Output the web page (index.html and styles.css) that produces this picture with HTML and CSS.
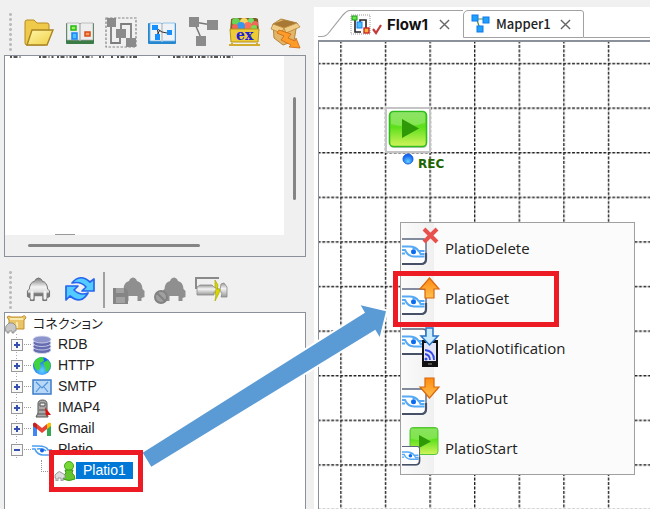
FILE: index.html
```html
<!DOCTYPE html>
<html lang="ja">
<head>
<meta charset="utf-8">
<title>Flow1</title>
<link rel="stylesheet" href="styles.css">
</head>
<body>
<svg class="defs" aria-hidden="true">
  <defs>
    <linearGradient id="gold" x1="0" y1="0" x2="1" y2="1"><stop offset="0" stop-color="#fff6a8"/><stop offset="1" stop-color="#f0cf45"/></linearGradient>
    <linearGradient id="green" x1="0" y1="0" x2="0" y2="1"><stop offset="0" stop-color="#6fdc3c"/><stop offset=".45" stop-color="#5ee01c"/><stop offset="1" stop-color="#d3f45c"/></linearGradient>
    <linearGradient id="orange" x1="0" y1="0" x2="0" y2="1"><stop offset="0" stop-color="#ff8a10"/><stop offset="1" stop-color="#ffc050"/></linearGradient>
    <linearGradient id="silver" x1="0" y1="0" x2="0" y2="1"><stop offset="0" stop-color="#7a7a7a"/><stop offset=".4" stop-color="#f4f4f4"/><stop offset=".62" stop-color="#dcdcdc"/><stop offset=".7" stop-color="#777"/><stop offset="1" stop-color="#8a8a8a"/></linearGradient>
    <linearGradient id="metal" x1="0" y1="0" x2="0" y2="1"><stop offset="0" stop-color="#9a9a9a"/><stop offset=".4" stop-color="#f4f4f4"/><stop offset="1" stop-color="#9a9a9a"/></linearGradient>
    <radialGradient id="ball" cx=".5" cy=".75" r=".6"><stop offset="0" stop-color="#5fd0ff"/><stop offset="1" stop-color="#1767f0"/></radialGradient>
    <symbol id="platio" viewBox="0 0 26 28">
      <path d="M-4 1H21q3 0 3 3V21q0 5-5 5H-4z" fill="#fff" stroke="#5b6780" stroke-width="1.400"/>
      <path d="M-4 26H19q5 0 5-5V15" fill="none" stroke="#465168" stroke-width="2.200"/>
      <path d="M0 8.500h7c5 0 8 1.500 9.500 4.500h6M0 12h3c2 4.500 5 6.500 9 6.500h10.500M22.500 16h-4c-2-5-5-6-8-6M0 15.500h3" fill="none" stroke="#55a9f5" stroke-width="1.900"/>
      <circle cx="11.500" cy="13.700" r="2.500" fill="#0a6cf0"/>
    </symbol>
    <symbol id="car" viewBox="0 0 26 28">
      <path d="M10 4q3-3 6 0l1 2q5 1 5.500 8l2 2v6l-3 1v3h-4v-5h-9v5h-4v-3l-3-1v-6l2-2Q4 7 9 6z"/>
    </symbol>
  </defs>
</svg>

<div class="app">
  <aside class="side">
    <div class="toolbar" role="toolbar">
      <span class="grip"></span>
      <button class="tool" aria-label="Open"><svg viewBox="0 0 34 34"><path d="M3 7q0-2 2-2h7l3 3h10q2 0 2 2v14l-4 6H5q-2 0-2-2z" fill="#efc94a" stroke="#b88a20"/><path d="M10 15h21l-6 15H5z" fill="url(#gold)" stroke="#a98422" stroke-width="1.400"/></svg></button>
      <button class="tool" aria-label="Flow"><svg viewBox="0 0 34 34"><rect x="3" y="8" width="28" height="21" rx="1" fill="#3b7b45"/><path d="M4 8h12l1 1 1-1h12v17H18l-1 1-1-1H4z" fill="#eee" stroke="#aaa" stroke-width=".7"/><path d="M17 8v18" stroke="#999"/><rect x="8" y="11" width="5" height="4" fill="#9af05a" stroke="#23ba16" stroke-width="1.500"/><rect x="9" y="18" width="5" height="6" fill="#4fc0ff" stroke="#1684f5" stroke-width="1.500"/><rect x="22" y="17" width="5" height="4" fill="#ff9b62" stroke="#d84b14" stroke-width="1.500"/></svg></button>
      <button class="tool" aria-label="Group"><svg viewBox="0 0 34 34" fill="#8b8b8b"><rect x="2" y="3" width="30" height="29" fill="none" stroke="#858585" stroke-width="1.200" stroke-dasharray="2.500 1.500"/><path d="M7 12v16h9v-6M17 14V9h10v16" fill="none" stroke="#7d7d7d" stroke-width="1.800"/><rect x="3" y="3" width="9" height="9"/><rect x="12" y="14" width="10" height="9"/><rect x="22" y="23" width="10" height="9"/></svg></button>
      <button class="tool" aria-label="Mapping"><svg viewBox="0 0 34 34"><rect x="3" y="8" width="28" height="21" rx="1" fill="#2587cf"/><path d="M5 8h11l1 1 1-1h12v18H18l-1 1-1-1H5z" fill="#eef3f8" stroke="#7cb7e2" stroke-width=".8"/><path d="M17 8v18" stroke="#aaa"/><path d="M11 13l6 4 5 1M12 13l2 9M15 15l-3 5" fill="none" stroke="#333"/><g fill="#1690ff"><rect x="7" y="10" width="6" height="5"/><rect x="10" y="19" width="5" height="6"/><rect x="22" y="15" width="5" height="5"/></g></svg></button>
      <button class="tool" aria-label="Nodes"><svg viewBox="0 0 34 34" fill="#8b8b8b"><path d="M8 7l18 3M9 9l6 14" fill="none" stroke="#777" stroke-width="1.500"/><rect x="3" y="2" width="10" height="10"/><rect x="21" y="5" width="11" height="10"/><rect x="10" y="21" width="10" height="10"/></svg></button>
      <button class="tool" aria-label="Samples"><svg viewBox="0 0 34 34"><path d="M4 4l3-1h22l2 1 1 12H3z" fill="#806022"/><circle cx="9" cy="7" r="4" fill="#67d455"/><circle cx="17" cy="7" r="4" fill="#f6d860"/><circle cx="24" cy="6" r="3" fill="#70e070"/><circle cx="28" cy="9" r="3" fill="#ef6858"/><circle cx="21" cy="11" r="4" fill="#ff7259"/><circle cx="14" cy="11" r="4" fill="#3896ef"/><circle cx="8" cy="12" r="3" fill="#f26653"/><circle cx="27" cy="13" r="3" fill="#76dd50"/><path d="M3 14h29l-1 13H4z" fill="#edcc38" stroke="#b5921c"/><path d="M2 30h31M5 28v3M30 28v3" stroke="#d2ac2d" stroke-width="2"/><text class="ex" x="9" y="25">ex</text></svg></button>
      <button class="tool" aria-label="Deploy"><svg viewBox="0 0 34 34"><path d="M5 9l8-5 16 4-3 18-11 4-9-7z" fill="#e2b568" stroke="#b5853d"/><path d="M5 9l11 4 13-5-13-3z" fill="#a87835"/><path d="M5 9l11 4-3 5-10-4zM16 13l13-5 3 4-14 6z" fill="#f0cd86" stroke="#b6863e" stroke-width=".8"/><path d="M11 15l12 4-3 4 7 3 1-3 4 10-11-1 2-2-10-5 3-4-7-3z" fill="#ff9b28" stroke="#c86912" stroke-width=".8"/></svg></button>
    </div>
    <section class="pane pane-top">
      <div class="view">
        <svg class="trace" viewBox="0 0 240 3" aria-hidden="true"><path d="M5 1h12M34 1h16M52 1h22M77 1h12M94 1h5M106 1h3M112 1h20M153 1h3M168 1h60" fill="none" stroke="#555" stroke-width="2" stroke-dasharray="2 1.500 4 2 1 2"/></svg>
        <span class="trace-end"></span>
      </div>
      <div class="track-y"><span class="thumb-y"></span></div>
      <div class="track-x"><span class="thumb-x"></span></div>
    </section>
    <div class="toolbar toolbar-low" role="toolbar">
      <span class="grip"></span>
      <button class="tool" aria-label="Connection"><svg viewBox="0 0 34 34"><use href="#car" x="4" y="2" width="25" height="28" fill="url(#silver)" stroke="#707070"/><path d="M10 19v6M23 19v6" stroke="#f2f2f2" stroke-width="3" stroke-linecap="round"/></svg></button>
      <button class="tool" aria-label="Refresh"><svg viewBox="0 0 34 34"><g fill="#55ccff" stroke="#2464f0" stroke-width="1.700" stroke-linejoin="round"><path d="M9 10q8-10 18-1l4-3v12H19l4-4q-5-6-14-4z"/><path d="M3 13h12l-4 4q6 6 14 3-7 12-18 3l-4 4z"/></g></svg></button>
      <span class="divider"></span>
      <button class="tool" aria-label="Save connection"><svg viewBox="0 0 34 34" fill="#8f8f8f"><use href="#car" x="8" y="2" width="26" height="28"/><path d="M1 15h12l3 3v13H1z" fill="#858585"/><path d="M4 15h8v5H4zM4 24h9v6H4z" fill="#a2a2a2"/></svg></button>
      <button class="tool" aria-label="Disable connection"><svg viewBox="0 0 34 34" fill="#8f8f8f"><use href="#car" x="8" y="2" width="26" height="28"/><circle cx="8" cy="24" r="6" fill="#a0a0a0" stroke="#828282" stroke-width="2"/><path d="M4 20l8 8" stroke="#828282" stroke-width="2"/></svg></button>
      <button class="tool" aria-label="Test connection"><svg viewBox="0 0 34 34"><path d="M2 16V5h23" fill="none" stroke="#8a8a8a" stroke-width="2"/><path d="M3 14l3-2h12l2 2 4 1v4h-4v3H3z" fill="url(#metal)" stroke="#888" stroke-width=".8"/><path d="M27 11l3-1 3 4v10h-6l1-3-2-4z" fill="url(#metal)" stroke="#888" stroke-width=".8"/><path d="M21 7l3 5-1 4h3l-1 4-4 8 1-7h-1l1-5-1-3z" fill="#d9d600" stroke="#a9a900" stroke-width=".7"/></svg></button>
    </div>
    <section class="pane pane-tree">
      <ul class="tree" role="tree">
        <li class="row root"><svg class="root-icon" viewBox="0 0 22 20"><path d="M2 3q2-2 4 0h11q3-3 4 1l-2 2v9H4V6z" fill="#e9c469" stroke="#c18f2e"/><path d="M5 5h13M12 8v6" stroke="#fae9ad" stroke-width="2"/><path d="M1 12l3-3h4l3 3v5H9v2H7v-2H4v2H2v-2H0z" fill="#c7c7c7" stroke="#858585" stroke-width=".8"/></svg><span>コネクション</span></li>
        <li class="row"><button class="twist" aria-label="RDB +"></button><i class="lead"></i><svg class="kind" viewBox="0 0 20 20"><g fill="#666cb0" stroke="#d8daf0" stroke-width=".8"><ellipse cx="10" cy="15" rx="9" ry="3.500"/><ellipse cx="10" cy="11.500" rx="9" ry="3.500"/><ellipse cx="10" cy="8" rx="9" ry="3.500"/><ellipse cx="10" cy="4.500" rx="9" ry="3.500" fill="#8e94cc"/></g></svg><span>RDB</span></li>
        <li class="row"><button class="twist" aria-label="HTTP +"></button><i class="lead"></i><svg class="kind" viewBox="0 0 20 20"><circle cx="10" cy="10" r="9" fill="url(#ball)"/><path d="M2 6Q5 1 11 1l1 4-4 2 1 4-3 4Q3 13 2 10zM11 7l5-3 3 5-2 5-3 2-1-5z" fill="#3ed33f"/></svg><span>HTTP</span></li>
        <li class="row"><button class="twist" aria-label="SMTP +"></button><i class="lead"></i><svg class="kind" viewBox="0 0 20 20"><rect x="1" y="3" width="18" height="14" fill="#b9d7f6" stroke="#3d7cc9" stroke-width="1.500"/><path d="M4 5l6 6 6-6M4 15l4-5M16 15l-4-5" fill="none" stroke="#4d93dc" stroke-width="1.200"/></svg><span>SMTP</span></li>
        <li class="row"><button class="twist" aria-label="IMAP4 +"></button><i class="lead"></i><svg class="kind" viewBox="0 0 20 20"><path d="M6 6q0-4 4.500-4T15 6v9l1 4H4l2-4z" fill="#aaa" stroke="#555"/><path d="M8 5h5v3H8zM7 12h7M6 16h8" fill="#eee" stroke="#555"/><path d="M13 9l6 8h-4l-1 2z" fill="#d81515"/></svg><span>IMAP4</span></li>
        <li class="row"><button class="twist" aria-label="Gmail +"></button><i class="lead"></i><svg class="kind" viewBox="0 0 20 20"><path d="M1 4v13h4V8z" fill="#4285f4"/><path d="M19 4v13h-4V8z" fill="#34a853"/><path d="M5 5v5l5 4 5-4V5l-5 4z" fill="#ea4335"/><path d="M1 5q1-3 4 0v5L1 7z" fill="#c5221f"/><path d="M19 5q-1-3-4 0v5l4-3z" fill="#fbbc04"/></svg><span>Gmail</span></li>
        <li class="row"><button class="twist open" aria-label="Platio −"></button><i class="lead"></i><svg class="kind" viewBox="0 0 20 20"><path d="M0 6h6c5 0 9 1 10 4h4M0 9h3c1 4 5 6 8 6h9M5 9q6-1 9 2" fill="none" stroke="#4d9df2" stroke-width="1.600"/><circle cx="10" cy="10.500" r="2" fill="#0a61e8"/></svg><span>Platio</span></li>
        <li class="row child"><i class="elbow"></i><svg class="user-icon" viewBox="0 0 22 20"><circle cx="15" cy="5" r="4.500" fill="#78d936" stroke="#41a51b"/><path d="M9 18q0-4 3-6l-1-3h8l-1 3q3 2 3 6-6 3-12 0z" fill="#63c52b" stroke="#379b18"/><path d="M1 14l2-2q2-3 5 0l3 2v3H9v3H7v-3H4v3H2v-3H1z" fill="#ddd" stroke="#888" stroke-width=".8"/></svg><span class="picked">Platio1</span></li>
      </ul>
    </section>
  </aside>

  <main class="work">
    <div class="tabs">
      <svg class="slope" viewBox="0 0 32 28" aria-hidden="true"><path d="M0 26.500h4q4 0 7-4L25 5q4-4.500 7-4.500" fill="none" stroke="#a2a2a2" stroke-width="1.200"/></svg>
      <div class="tab tab-on">
        <svg class="flow-icon" viewBox="0 0 32 22"><rect x="1" y="1" width="19" height="19" fill="none" stroke="#999" stroke-dasharray="1 1"/><path d="M5 5v13h6M10 9V6h6v10" fill="none" stroke="#222" stroke-width="1.600"/><rect x="2" y="2" width="5" height="4" fill="#66e64b" stroke="#1a9c17"/><rect x="7" y="8" width="5" height="6" fill="#4cc0ff" stroke="#1680ef"/><rect x="14" y="14" width="5" height="5" fill="#ffb03c" stroke="#c81d1d" stroke-width="1.300"/><path d="M23 15l3 4 5-8" fill="none" stroke="#c23a3a" stroke-width="2.200"/></svg>
        <button class="name">Flow1</button>
        <button class="close" aria-label="Close Flow1"><svg viewBox="0 0 12 12"><path d="M1 1l10 10M11 1L1 11"/></svg></button>
      </div>
      <div class="tab tab-off">
        <svg class="map-icon" viewBox="0 0 20 20"><path d="M5 5h10M6 6l3 9" fill="none" stroke="#4a8a3c" stroke-width="1.200"/><g fill="#1ea0ff" stroke="#1478e8"><rect x="1" y="1" width="6" height="6"/><rect x="12" y="3" width="6" height="6"/><rect x="6" y="12" width="6" height="6"/></g></svg>
        <button class="name">Mapper1</button>
        <button class="close" aria-label="Close Mapper1"><svg viewBox="0 0 12 12"><path d="M1 1l10 10M11 1L1 11"/></svg></button>
      </div>
      <span class="tab-rest"></span>
    </div>
    <div class="canvas">
      <svg class="grid" aria-hidden="true">
        <defs><pattern id="cell" x="21.200" y="20.800" width="44.600" height="44.600" patternUnits="userSpaceOnUse"><path d="M0 .7h44.600M.7 0v44.600" stroke="#222" stroke-width="1.400" stroke-dasharray="2.860 1.600" fill="none"/></pattern></defs>
        <rect width="100%" height="100%" fill="url(#cell)"/>
      </svg>
      <div class="node">
        <svg viewBox="0 0 46 46"><rect x="1" y="1" width="44" height="44" fill="#fff" stroke="#c4c4c4" stroke-width="2"/><rect x="5" y="5" width="37" height="36" rx="4" fill="#888" opacity=".5"/><rect x="4.500" y="4.500" width="37" height="35" rx="4" fill="url(#green)" stroke="#2fbf1c" stroke-width="1.600"/><path d="M6 8q0-3 3-3h28q3 0 3 3v8q-17 6-34 1z" fill="#fff" opacity=".22"/><path d="M17 12v19l17-9.500z" fill="#2f9a08"/></svg>
      </div>
      <div class="port"><svg viewBox="0 0 12 12"><circle cx="6" cy="6" r="5" fill="url(#ball)" stroke="#1a5de0"/></svg><span>REC</span></div>
      <div class="menu" role="menu">
        <button class="item" role="menuitem"><svg viewBox="0 0 40 50"><use href="#platio" x="0" y="15" width="26" height="28"/><path d="M22 6l13 13M35 6L22 19" stroke="#e8504e" stroke-width="4"/></svg>PlatioDelete</button>
        <button class="item" role="menuitem"><svg viewBox="0 0 40 50"><use href="#platio" x="0" y="15" width="26" height="28"/><path d="M27.500 5L37 16h-5v9h-9v-9h-5z" fill="url(#orange)" stroke="#d9660c" stroke-width="1.200"/></svg>PlatioGet</button>
        <button class="item" role="menuitem"><svg viewBox="0 0 40 50"><use href="#platio" x="0" y="5" width="26" height="28"/><rect x="20" y="17" width="16" height="27" fill="#111"/><rect x="22" y="20" width="12" height="18" fill="#e2e6f8"/><path d="M23 27q9 1 9 10M23 31q5 1 5 6" fill="none" stroke="#3548e8" stroke-width="1.800"/><circle cx="24" cy="36" r="1.500" fill="#3548e8"/><path d="M26 41h4" stroke="#999"/><path d="M24 5h7v8h5l-8.500 9-8.500-9h5z" fill="#c9eaff" stroke="#2874c8" stroke-width="1.500"/></svg>PlatioNotification</button>
        <button class="item" role="menuitem"><svg viewBox="0 0 40 50"><use href="#platio" x="0" y="15" width="26" height="28"/><path d="M23 5h9v9h5l-9.500 11L18 14h5z" fill="url(#orange)" stroke="#d9660c" stroke-width="1.200"/></svg>PlatioPut</button>
        <button class="item" role="menuitem"><svg viewBox="0 0 40 50"><rect x="8" y="4.500" width="28" height="27" rx="3" fill="url(#green)" stroke="#55c63a"/><path d="M9 6h26v9q-13 4-26 1z" fill="#fff" opacity=".2"/><path d="M17 12v13l12-6.500z" fill="#2f9a08"/><use href="#platio" x="0" y="22" width="19" height="22"/></svg>PlatioStart</button>
      </div>
    </div>
  </main>

  <svg class="pointer" viewBox="0 0 260 170" aria-hidden="true"><path d="M6.700 151.700L229 11.700 224.700 4.300 250 10.300 243.700 36 239.300 28.700 15.300 165.700z" fill="#5b9bd5" stroke="#fff" stroke-width="4" paint-order="stroke"/></svg>
  <span class="mark mark-node"></span>
  <span class="mark mark-item"></span>
</div>
</body>
</html>
```
FILE: styles.css
```css
* { box-sizing: border-box; }

body {
  margin: 0;
  background: #f0f0f0;
  color: #222;
  font-family: "Liberation Sans", "Noto Sans CJK JP", sans-serif;
  font-size: 14px;
}

button {
  margin: 0;
  padding: 0;
  border: 0;
  background: none;
  color: inherit;
  font: inherit;
}

svg { display: block; flex: none; }

.defs { position: absolute; width: 0; height: 0; }

.app {
  position: relative;
  display: grid;
  grid-template-columns: 314fr 336fr;
  height: 100vh;
  overflow: hidden;
}

/* Left side */
.side {
  display: flex;
  flex-direction: column;
  min-width: 0;
  padding: 0 8px 0 4px;
}

.toolbar {
  display: flex;
  align-items: center;
  height: 55px;
  padding: 9px 0 0 5px;
}

.toolbar-low { padding-top: 11px; }

.grip {
  width: 3px;
  height: 40px;
  margin-right: 6px;
  background: radial-gradient(circle, #bbb 1px, transparent 2px) 0 0 / 3px 5px;
}

.tool { flex: none; width: 41px; }
.tool svg { width: 34px; height: 34px; margin: 0 auto; }

.ex {
  fill: #1d20d8;
  font: bold 14px "DejaVu Serif", serif;
}

.divider {
  width: 2px;
  height: 36px;
  margin: 0 3px;
  background: #a0a0a0;
}

.pane {
  border: 1px solid #8b919b;
  min-height: 0;
}

.pane-top {
  flex: 202 1 0;
  display: grid;
  grid-template: 1fr 21px / 1fr 21px;
}

.view {
  display: flex;
  flex-direction: column;
  justify-content: space-between;
  background: #fff;
}

.trace { width: 240px; height: 3px; }

.trace-end {
  width: 20px;
  height: 1px;
  margin-left: 50px;
  background: #999;
}

.track-y { padding: 41px 0 0 9px; }
.track-x { padding: 9px 0 0 23px; }

.thumb-y,
.thumb-x {
  display: block;
  background: #858585;
  border-radius: 2px;
}

.thumb-y { width: 3px; height: 103px; }
.thumb-x { width: 67%; height: 3px; }

.pane-tree {
  flex: 197 1 0;
  border-bottom: 0;
  background: #fff;
  overflow: hidden;
}

.tree {
  margin: 0;
  padding: 0;
  list-style: none;
}

.row {
  display: flex;
  align-items: center;
  height: 21px;
  padding-left: 6px;
  line-height: 21px;
  white-space: nowrap;
  background: repeating-linear-gradient(#aaa 0 1px, transparent 1px 3px) 11px 0 / 1px 100% no-repeat;
}

.root {
  gap: 6px;
  padding-left: 0;
  background: none;
  font-size: 13px;
  font-feature-settings: "palt";
}

.root-icon { width: 22px; height: 20px; }

.twist {
  width: 12px;
  height: 12px;
  border: 1px solid #999;
  background:
    linear-gradient(#3650b0, #3650b0) center / 6px 2px no-repeat,
    linear-gradient(#3650b0, #3650b0) center / 2px 6px no-repeat,
    #f8f8f8;
}

.twist.open {
  background: linear-gradient(#3650b0, #3650b0) center / 6px 2px no-repeat, #f8f8f8;
}

.lead {
  width: 7px;
  margin: 0 1px;
  border-top: 1px dotted #999;
}

.kind { width: 20px; height: 20px; margin-right: 6px; }

.child { padding-left: 36px; background: none; }

.elbow {
  width: 13px;
  height: 12px;
  margin-bottom: 9px;
  border: dotted #999;
  border-width: 0 0 1px 1px;
}

.user-icon { width: 22px; height: 20px; }

.picked {
  height: 17px;
  padding: 0 7px;
  background: #0078d7;
  color: #fff;
  line-height: 17px;
}

/* Right side */
.work {
  display: flex;
  flex-direction: column;
  min-width: 0;
  margin-top: 7px;
  padding-left: 4px;
  background: #fff;
}

.tabs {
  display: flex;
  height: 33px;
  padding-top: 3px;
}

.slope { width: 32px; height: 28px; }

.tab {
  display: flex;
  align-items: center;
  height: 28px;
  border-top: 1px solid #a2a2a2;
}

.tab-on { width: 113px; }

.tab-off {
  width: 121px;
  padding-left: 7px;
  border: 1px solid #a2a2a2;
  border-radius: 5px 3px 0 0;
}

.tab-rest {
  flex: 1;
  border-bottom: 1px solid #a2a2a2;
  height: 28px;
}

.flow-icon { width: 32px; height: 22px; margin-right: 5px; }
.map-icon { width: 20px; height: 20px; margin-right: 5px; }

.tab-on .name { font: bold 15px/20px Inter, sans-serif; color: #111; }
.tab-off .name { font: 500 13px/20px "Noto Sans CJK JP", sans-serif; }

.close { margin-left: 9px; }
.tab-on .close { margin-left: 11px; }
.close svg { width: 11px; height: 11px; fill: none; stroke: #666; stroke-width: 1.5; }

.canvas {
  position: relative;
  flex: 1;
  border: solid #8b919b;
  border-width: 2px 0 0 1px;
  overflow: hidden;
}

.grid { width: 100%; height: 100%; }

.node { position: absolute; left: 66px; top: 65px; }
.node svg { width: 46px; height: 46px; }

.port {
  position: absolute;
  left: 83px;
  top: 111px;
  display: flex;
  gap: 4px;
  color: #1c6400;
  font: bold 12px/22px "DejaVu Sans", sans-serif;
}

.port svg { width: 12px; height: 12px; }

.menu {
  position: absolute;
  left: 81px;
  top: 180px;
  width: 235px;
  padding: 0 1px 1px;
  border: 1px solid #a0a0a0;
  background: linear-gradient(90deg, #fbfbfb, #f0f0f0 33px, #fbfbfb 33px);
}

.item {
  display: flex;
  align-items: center;
  gap: 3px;
  width: 100%;
  height: 50px;
  color: #222;
  font: 15px/20px "Open Sans", sans-serif;
}

.item svg { width: 40px; height: 50px; }

/* Callouts laid over the window */
.pointer {
  position: absolute;
  left: 136px;
  top: 301px;
  width: 260px;
  height: 170px;
}

.mark { position: absolute; border: 5px solid #ed1c24; }
.mark-node { left: 49px; top: 450px; width: 94px; height: 42px; }
.mark-item { left: 393px; top: 271px; width: 166px; height: 56px; }
```
